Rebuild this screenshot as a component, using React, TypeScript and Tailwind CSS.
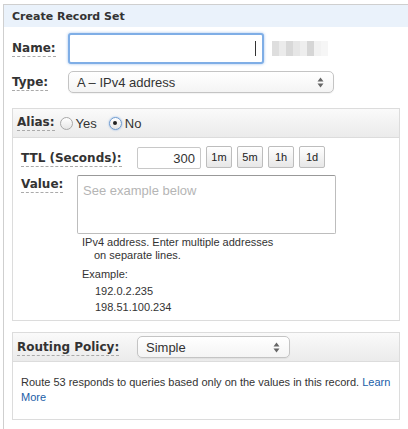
import React from 'react';

const Label = ({ children }: { children: React.ReactNode }) => (
  <span className="inline-block font-['DejaVu_Sans',sans-serif] font-bold text-[12px] leading-[14px] text-[#333] border-b border-dashed border-[#aaa] pb-[1px]">
    {children}
  </span>
);

const Arrows = () => (
  <svg width="7" height="11" viewBox="0 0 7 11" className="shrink-0">
    <path d="M3.5 0.5 L6.5 4.5 H0.5 Z" fill="#666" />
    <path d="M3.5 10.5 L6.5 6.5 H0.5 Z" fill="#666" />
  </svg>
);

const Select = ({ value, className }: { value: string; className: string }) => (
  <div
    className={`flex items-center justify-between rounded-[5px] border border-[#c4c4c4] bg-gradient-to-b from-white to-[#f4f4f4] pl-[8px] pr-[9px] text-[13px] leading-none text-[#333] shadow-[0_1px_1px_rgba(0,0,0,0.05)] ${className}`}
  >
    <span>{value}</span>
    <Arrows />
  </div>
);

const Radio = ({ checked }: { checked?: boolean }) => (
  <span
    className={`inline-flex items-center justify-center w-[13px] h-[13px] rounded-full border bg-gradient-to-b from-white to-[#e6e6e6] ${
      checked ? 'border-[#6e9bd0] shadow-[0_0_2px_rgba(80,140,220,0.7)]' : 'border-[#a8a8a8]'
    }`}
  >
    {checked && <span className="w-[4px] h-[4px] rounded-full bg-[#222]" />}
  </span>
);

const TimeButton = ({ label }: { label: string }) => (
  <button className="w-[26px] h-[22px] rounded-[2px] border border-[#bdbdbd] bg-gradient-to-b from-white to-[#e7e7e7] text-[11px] leading-none text-[#222] flex items-center justify-center">
    {label}
  </button>
);

const blurBlocks = ['#dedede', '#ebebeb', '#d8d8d8', '#e6e6e6', '#eeeeee', '#d6d6d6', '#f2f2f2', '#f6f6f6'];

export default function App() {
  return (
    <div className="w-[408px] h-[429px] overflow-hidden bg-white pl-[3px] pt-[4px] font-['Liberation_Sans',Arial,sans-serif] text-[#333] leading-none">
      <div className="h-[440px] border border-r-0 border-[#cfcfcf]">
        {/* Title bar */}
        <div className="h-[22px] bg-[#eaf2fb] pl-[8px] flex items-center font-['DejaVu_Sans',sans-serif] font-bold text-[11px] text-[#333]">
          Create Record Set
        </div>

        <div className="pl-[8px]">
          {/* Name */}
          <div className="mt-[6px] flex items-center">
            <div className="w-[56px] flex pt-[1px]">
              <Label>Name:</Label>
            </div>
            <div className="w-[196px] h-[31px] rounded-[3px] border-2 border-[#7faee6] shadow-[0_0_3px_rgba(90,150,225,0.6)] bg-white flex items-center justify-end pr-[6px]">
              <span className="w-px h-[15px] bg-[#333]" />
            </div>
            <div className="ml-[8px] flex h-[15px]">
              {blurBlocks.map((c, i) => (
                <span key={i} className="w-[7px] h-[15px]" style={{ backgroundColor: c }} />
              ))}
            </div>
          </div>

          {/* Type */}
          <div className="mt-[7px] flex items-center">
            <div className="w-[56px] flex pt-[1px]">
              <Label>Type:</Label>
            </div>
            <Select value="A – IPv4 address" className="w-[266px] h-[22px]" />
          </div>

          {/* Alias box */}
          <div className="mt-[15px] w-[388px] h-[213px] border border-[#dcdcdc]">
            <div className="h-[29px] border-b border-[#dcdcdc] bg-gradient-to-b from-[#fafafa] to-[#ebebeb] pl-[4px] flex items-center text-[13px]">
              <Label>Alias:</Label>
              <span className="ml-[5px] flex items-center">
                <Radio />
                <span className="ml-[3px]">Yes</span>
              </span>
              <span className="ml-[12px] flex items-center">
                <Radio checked />
                <span className="ml-[3px]">No</span>
              </span>
            </div>

            <div className="pl-[8px]">
              {/* TTL */}
              <div className="mt-[9px] flex items-center">
                <div className="w-[116px] flex pt-[1px]">
                  <Label>TTL (Seconds):</Label>
                </div>
                <div className="w-[64px] h-[22px] rounded-[2px] border border-[#c8c8c8] bg-white text-[13px] flex items-center justify-end pr-[5px]">
                  300
                </div>
                <div className="ml-[5px] flex gap-[5px] -mt-[2px]">
                  <TimeButton label="1m" />
                  <TimeButton label="5m" />
                  <TimeButton label="1h" />
                  <TimeButton label="1d" />
                </div>
              </div>

              {/* Value */}
              <div className="mt-[6px] flex items-start">
                <div className="w-[56px] flex pt-[2px]">
                  <Label>Value:</Label>
                </div>
                <div>
                  <div className="w-[259px] h-[59px] rounded-[2px] border border-[#bdbdbd] border-t-[#999] bg-white pl-[5px] pt-[8px] text-[13px] text-[#b5b5b5]">
                    See example below
                  </div>
                  <div className="pl-[5px] pt-[2px] text-[11px] text-[#333]">
                    <div className="leading-[13px]">IPv4 address. Enter multiple addresses</div>
                    <div className="leading-[13px] pl-[12px]">on separate lines.</div>
                    <div className="mt-[4px] leading-[17px]">Example:</div>
                    <div className="leading-[16px] pl-[13px]">192.0.2.235</div>
                    <div className="leading-[17px] pl-[13px]">198.51.100.234</div>
                  </div>
                </div>
              </div>
            </div>
          </div>

          {/* Routing Policy box */}
          <div className="mt-[11px] w-[388px] h-[88px] border border-[#dcdcdc]">
            <div className="h-[29px] border-b border-[#dcdcdc] bg-gradient-to-b from-[#fafafa] to-[#ebebeb] pl-[4px] flex items-center">
              <div className="w-[120px] flex pt-[1px]">
                <Label>Routing Policy:</Label>
              </div>
              <Select value="Simple" className="w-[153px] h-[22px]" />
            </div>
            <div className="pl-[8px] pr-[4px] pt-[13px] text-[11px] leading-[15px] text-[#333]">
              <div>
                Route 53 responds to queries based only on the values in this record.{' '}
                <a className="text-[#1a5ea8]">Learn</a>
              </div>
              <div>
                <a className="text-[#1a5ea8]">More</a>
              </div>
            </div>
          </div>
        </div>
      </div>
    </div>
  );
}
